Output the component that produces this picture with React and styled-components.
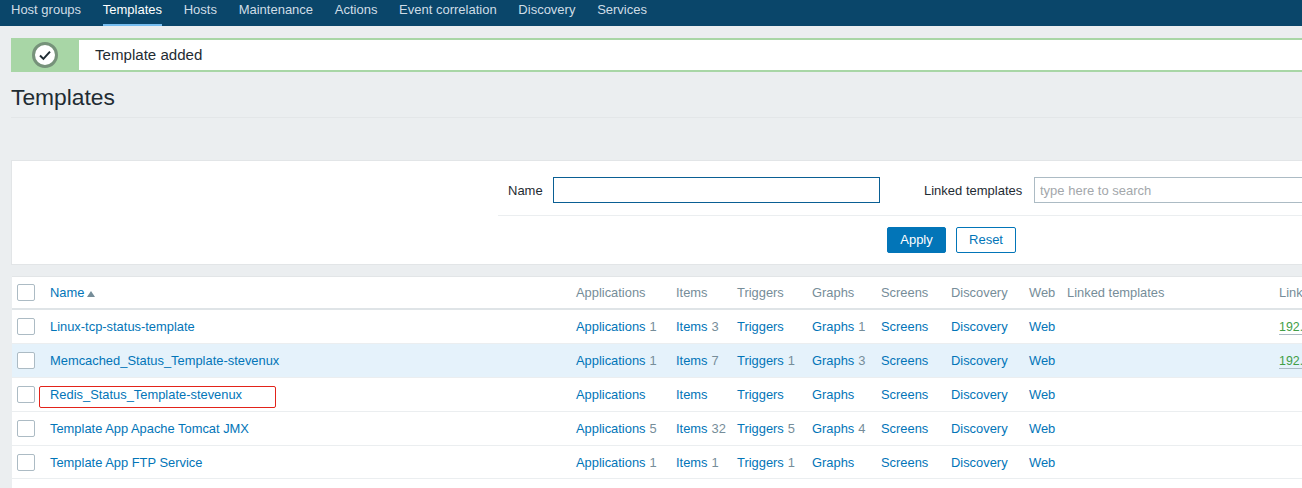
import styled, { createGlobalStyle } from "styled-components";

const NAV_ITEMS = ["Host groups", "Templates", "Hosts", "Maintenance", "Actions", "Event correlation", "Discovery", "Services"];

const ROWS = [
    { name: "Linux-tcp-status-template", apps: 1, items: 3, triggers: null, graphs: 1, linked: true },
    { name: "Memcached_Status_Template-stevenux", apps: 1, items: 7, triggers: 1, graphs: 3, linked: true, hover: true },
    { name: "Redis_Status_Template-stevenux", marked: true },
    { name: "Template App Apache Tomcat JMX", apps: 5, items: 32, triggers: 5, graphs: 4 },
    { name: "Template App FTP Service", apps: 1, items: 1, triggers: 1 },
];

function Counted({ label, count }) {
    return (
        <Cell>
            <Link>{label}</Link>
            {count ? <Count>{count}</Count> : null}
        </Cell>
    );
}

function App() {
    return (
        <Page>
            <GlobalStyle />
            <Nav>
                {NAV_ITEMS.map((item) => (
                    <NavItem key={item} $active={item === "Templates"}>
                        {item}
                    </NavItem>
                ))}
            </Nav>
            <Content>
                <Message>
                    <MessageIcon>
                        <svg width="28" height="28" viewBox="0 0 28 28">
                            <circle cx="14" cy="14" r="11.5" fill="#fff" stroke="#76927a" strokeWidth="3" />
                            <path d="M9 14.5l3.4 3.4L19 10.6" fill="none" stroke="#1f2c33" strokeWidth="2" />
                        </svg>
                    </MessageIcon>
                    <MessageText>Template added</MessageText>
                </Message>
                <Heading>Templates</Heading>
                <Filter>
                    <FilterFields>
                        <FieldLabel>Name</FieldLabel>
                        <NameInput />
                        <LinkedLabel>Linked templates</LinkedLabel>
                        <SearchInput placeholder="type here to search" />
                    </FilterFields>
                    <FilterButtons>
                        <ApplyButton>Apply</ApplyButton>
                        <ResetButton>Reset</ResetButton>
                    </FilterButtons>
                </Filter>
                <Table>
                    <HeaderRow>
                        <CheckCell>
                            <Checkbox />
                        </CheckCell>
                        <Cell>
                            <Link>Name</Link>
                            <SortArrow />
                        </Cell>
                        <Cell>Applications</Cell>
                        <Cell>Items</Cell>
                        <Cell>Triggers</Cell>
                        <Cell>Graphs</Cell>
                        <Cell>Screens</Cell>
                        <Cell>Discovery</Cell>
                        <Cell>Web</Cell>
                        <Cell>Linked templates</Cell>
                        <Cell>Linked to</Cell>
                    </HeaderRow>
                    {ROWS.map((row) => (
                        <Row key={row.name} $hover={row.hover}>
                            <CheckCell>
                                <Checkbox />
                            </CheckCell>
                            <Cell>
                                <Link>{row.name}</Link>
                                {row.marked ? <RedMark /> : null}
                            </Cell>
                            <Counted label="Applications" count={row.apps} />
                            <Counted label="Items" count={row.items} />
                            <Counted label="Triggers" count={row.triggers} />
                            <Counted label="Graphs" count={row.graphs} />
                            <Cell>
                                <Link>Screens</Link>
                            </Cell>
                            <Cell>
                                <Link>Discovery</Link>
                            </Cell>
                            <Cell>
                                <Link>Web</Link>
                            </Cell>
                            <Cell />
                            <Cell>{row.linked ? <HostLink>192.168.7.101</HostLink> : null}</Cell>
                        </Row>
                    ))}
                    <Row />
                </Table>
            </Content>
        </Page>
    );
}

const GlobalStyle = createGlobalStyle`
    html, body {
        margin: 0;
        padding: 0;
        background: #ebeef0;
        overflow: hidden;
    }
`;

const Page = styled.div`
    width: 1302px;
    height: 488px;
    overflow: hidden;
    background: #ebeef0;
    color: #1f2c33;
    font-family: "Liberation Sans", Arial, sans-serif;
    font-size: 13px;
`;

const Nav = styled.div`
    display: flex;
    gap: 21.7px;
    height: 26px;
    padding-left: 11px;
    background: #0a466a;
`;

const NavItem = styled.div`
    height: 24px;
    line-height: 20px;
    font-size: 13px;
    color: ${({ $active }) => ($active ? "#fff" : "#cfdde6")};
    border-bottom: ${({ $active }) => ($active ? "2px solid #75bdf0" : "2px solid transparent")};
`;

const Content = styled.div`
    padding: 12px 0 0 11px;
    width: 1400px;
`;

const Message = styled.div`
    display: flex;
    height: 34px;
    box-sizing: border-box;
    border: 2px solid #a8d6a6;
    border-left: 0;
    border-radius: 2px;
    background: #fff;
`;

const MessageIcon = styled.div`
    display: flex;
    align-items: center;
    justify-content: center;
    width: 68px;
    margin-top: -2px;
    margin-bottom: -2px;
    background: #a8d6a6;
`;

const MessageText = styled.div`
    padding-left: 16px;
    line-height: 30px;
    font-size: 15.1px;
`;

const Heading = styled.h1`
    margin: 0;
    height: 34px;
    width: 1291px;
    padding-top: 11px;
    border-bottom: 1px solid #e3e6e8;
    line-height: 28px;
    font-size: 22.8px;
    font-weight: 400;
`;

const Filter = styled.div`
    box-sizing: border-box;
    height: 105px;
    margin-top: 42px;
    padding-left: 486px;
    background: #fff;
    border: 1px solid #e2e5e7;
    border-width: 1px 0 1px 1px;
`;

const FilterFields = styled.div`
    display: flex;
    align-items: center;
    box-sizing: border-box;
    height: 55px;
    padding: 4px 0 0 10px;
    border-bottom: 1px solid #ebeef0;
`;

const FieldLabel = styled.label`
    width: 45px;
`;

const LinkedLabel = styled.label`
    width: 110px;
    margin-left: 44px;
`;

const NameInput = styled.input`
    box-sizing: border-box;
    width: 327px;
    height: 26px;
    border: 1px solid #0a5f94;
    outline: 0;
    background: #fff;
`;

const SearchInput = styled.input`
    box-sizing: border-box;
    width: 320px;
    height: 26px;
    padding: 0 5px;
    border: 1px solid #acbbc4;
    outline: 0;
    background: #fff;
    font-family: inherit;
    font-size: 13px;

    &::placeholder {
        color: #a3a7ab;
        opacity: 1;
    }
`;

const FilterButtons = styled.div`
    display: flex;
    gap: 10px;
    padding: 11px 0 0 389px;
`;

const ApplyButton = styled.button`
    box-sizing: border-box;
    width: 59px;
    height: 26px;
    padding: 0 0 2px;
    border: 1px solid #0275b8;
    border-radius: 2px;
    background: #0275b8;
    color: #fff;
    font-family: inherit;
    font-size: 13px;
`;

const ResetButton = styled(ApplyButton)`
    width: 60px;
    background: #fff;
    color: #0275b8;
`;

const Table = styled.div`
    margin-top: 11px;
    margin-left: 1px;
    background: #fff;
    border-top: 1px solid #e2e5e7;
`;

const Row = styled.div`
    display: grid;
    grid-template-columns: 38px 526px 100px 61px 75px 69px 70px 78px 38px 212px 120px;
    align-items: center;
    height: 33.9px;
    box-sizing: border-box;
    border-bottom: 1px solid #ebeef0;
    background: ${({ $hover }) => ($hover ? "#e5f2fb" : "#fff")};
    color: #768d99;
    font-size: 12.9px;
`;

const HeaderRow = styled(Row)`
    height: 33px;
    border-bottom: 2px solid #dfe4e7;
`;

const Cell = styled.div`
    position: relative;
    white-space: nowrap;
`;

const CheckCell = styled.div`
    display: flex;
    padding-left: 5px;
`;

const Checkbox = styled.span`
    display: block;
    box-sizing: border-box;
    width: 18px;
    height: 17px;
    border: 1px solid #acbbc4;
    border-radius: 2px;
    background: #fff;
`;

const Link = styled.span`
    color: #0275b8;
`;

const Count = styled.span`
    margin-left: 4px;
    color: #768d99;
`;

const SortArrow = styled.span`
    display: inline-block;
    margin-left: 3px;
    border: 4px solid transparent;
    border-top: 0;
    border-bottom: 6px solid #768d99;
`;

const HostLink = styled.span`
    color: #429e47;
    font-size: 12.4px;
    border-bottom: 1px solid #acbbc4;
`;

const RedMark = styled.div`
    position: absolute;
    left: -11px;
    top: -1px;
    width: 235px;
    height: 20px;
    border: 1px solid #e2231a;
    border-radius: 2px;
`;

export default App;
